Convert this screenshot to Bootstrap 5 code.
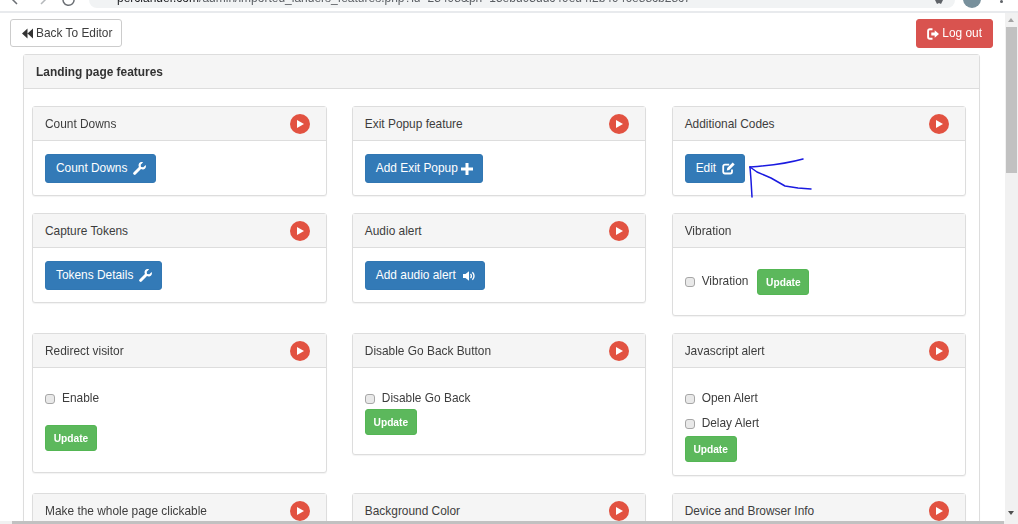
<!DOCTYPE html>
<html lang="en">
<head>
<meta charset="utf-8">
<title>Landing page features</title>
<link href="https://cdn.jsdelivr.net/npm/bootstrap@5.3.0/dist/css/bootstrap.min.css" rel="stylesheet">
<style>
html,body{margin:0;height:524px;overflow:hidden;background:#fff}
body{font-family:"Liberation Sans",Arial,sans-serif;font-size:11.9px;color:#3d3d3d}
.view{position:relative;width:1018px;height:524px;overflow:hidden;filter:blur(.35px)}
.chrome-bar{height:13px;border-bottom:2px solid #e8eaed;overflow:hidden;position:relative;background:#fff}
.chrome-nav{width:89px;flex:none}
.url-pill{width:866px;height:8px;background:#f1f3f4;border-radius:0 0 14px 14px;overflow:hidden;padding-left:28px;flex:none}
.url-text{font-size:12px;line-height:12px;margin-top:-8px;white-space:nowrap;color:#5a5e63}
.url-text b{font-weight:400;color:#202124}
.chrome-star{flex:none;margin-left:-21px}
.chrome-ava{width:18px;height:18px;border-radius:50%;background:#78909c;margin-top:-10px;margin-left:19px;flex:none}
.chrome-dots{width:3px;height:3px;border-radius:50%;background:#5f6368;margin-left:19px;flex:none}
.mid{height:508px}
.page{width:1005px;flex:none;overflow:hidden}
.top-actions{padding:6px 12px 0 10px;height:41px}
.btn-legacy{font-size:11.9px;line-height:17px;border-radius:3px;display:inline-flex;align-items:center;font-family:inherit}
.btn-back{height:28px;padding:0 9px 0 11px;gap:3px;background:#fff;border:1px solid #ccc;color:#3d3d3d}
.btn-out{height:29px;padding:0 10px;gap:3px;background:#d9534f;border:1px solid #d9534f;color:#fff}
.btn-main{height:29px;padding:0 9px 0 10px;gap:6px;background:#337ab7;border:1px solid #3177b3;color:#fff}
.gap-plus{gap:3px}
.gap-audio{gap:7px}
.btn-upd{height:26px;width:52px;justify-content:center;padding:0;background:#5cb85c;border:1px solid #54b654;color:#fff;font-size:10.2px;font-weight:700}
.outer{margin:0 25px 0 23px;border:1px solid #ddd;border-radius:3px;box-shadow:0 1px 1px rgba(0,0,0,.05)}
.outer-head{height:34px;background:#f5f5f5;border-bottom:1px solid #ddd;padding-left:12px;font-weight:700;font-size:11.9px;line-height:35px;color:#333}
.outer-body{padding:17px 12.75px 0 8px}
.tiles{display:grid;grid-template-columns:repeat(3,1fr);column-gap:25.25px;row-gap:17px;align-items:start}
.tile{border:1px solid #ddd;border-radius:3px;box-shadow:0 1px 1px rgba(0,0,0,.05);background:#fff}
.tile-head{height:34px;background:#f5f5f5;border-bottom:1px solid #ddd;padding:0 16px 0 12px;display:flex;align-items:center;justify-content:space-between}
.tile-title{padding-top:2px}
.tile-body{padding:13px 12px 12px}
.tile-form{padding-top:21px}
.tile-tall{height:104px}
.tile-vib{height:67px;padding-top:21px}
.tile-dis{height:86px}
.tile-js{height:107px}
.play{width:20px;height:20px;border-radius:50%;background:#e25241;display:flex;align-items:center;justify-content:center;flex:none}
.chk{display:flex;align-items:center;gap:7px;height:20px;margin:0}
.chk input{width:10px;height:10px;margin:0;border:1px solid #a6a6a6;border-radius:2px;background-color:#e9e9e9;flex:none}
.chk-vib{margin-top:3px}
.upd-vib{margin-left:9px}
.upd-tall{margin-top:16px}
.chk-next{margin-top:5px}
.upd-js{margin-top:2px}
.vscroll{width:13px;flex:none;background:#f1f1f1;position:relative}
.vthumb{position:absolute;left:1px;right:1px;top:14px;height:146px;background:#c1c1c1}
.arr-up,.arr-down{position:absolute;left:3px;width:0;height:0;border-left:3.5px solid transparent;border-right:3.5px solid transparent}
.arr-up{top:5px;border-bottom:4px solid #a3a3a3}
.arr-down{bottom:6px;border-top:4px solid #505050}
.hscroll{height:3px;background:#f1f1f1;padding-left:12px}
.hthumb{width:992px;height:3px;background:#c1c1c1}
.scribble{position:absolute;left:0;top:0;pointer-events:none}
</style>
</head>
<body>
<svg width="0" height="0" class="position-absolute">
  <defs>
    <symbol id="ic-play" viewBox="0 0 8 8"><path d="M1 0v8l7-4z" fill="#fff"/></symbol>
    <symbol id="ic-wrench" viewBox="0 0 13 13"><path d="M12.7 2.900 10.300 5.300 8 5 7.700 2.700 10.100.3C8.400-.3 6.500.3 5.800 2 5.400 3 5.500 4.100 5.900 5L.5 10.400a1.300 1.300 0 0 0 0 1.800l.3.300a1.300 1.300 0 0 0 1.800 0L8 7.100c.9.400 2 .5 3 .1 1.700-.7 2.300-2.600 1.700-4.300z" fill="#fff"/></symbol>
  </defs>
</svg>
<div class="view d-flex flex-column">
  <div class="chrome-bar d-flex align-items-start">
    <svg class="chrome-nav" width="89" height="8" viewBox="0 0 89 8" fill="none" stroke="#6b6f74" stroke-width="1.5"><path d="M17 -3 12 2 17 7M12 2H22" transform="translate(0 -3)"/><path d="M41 -3 46 2 41 7" transform="translate(0 -3)" stroke="#b5b8bb"/><path d="M74 0a5.500 5.500 0 1 1-1.500-3" transform="translate(0 -1)"/></svg>
    <div class="url-pill"><div class="url-text"><b>perclander.com</b>/admin/imported_landers_features.php?id=23498&amp;pn=15ebd93ddc49ed4f2b4946e88cb28c7</div></div>
    <svg class="chrome-star" width="10" height="6" viewBox="0 0 10 6"><path d="M1 0 3 4 5 3 7 4 9 0Z" fill="#5f6368"/></svg>
    <div class="chrome-ava"></div>
    <div class="chrome-dots"></div>
  </div>
  <div class="mid d-flex">
    <div class="page">
      <div class="top-actions d-flex justify-content-between align-items-start">
        <a href="#" class="btn btn-legacy btn-back">
          <svg width="11" height="11" viewBox="0 0 11 11" fill="#333"><path d="M5.500 .5v10L0 5.500zM11 .5v10L5.500 5.500z"/></svg>Back To Editor</a>
        <a href="#" class="btn btn-legacy btn-out">
          <svg width="12" height="12" viewBox="0 0 12 12" fill="none" stroke="#fff" stroke-width="1.900"><path d="M5.500 1.200H2.800A1.700 1.700 0 0 0 1.100 2.900v6.200a1.700 1.700 0 0 0 1.700 1.700h2.700"/><path d="M4.300 4.500h3.400V2.200L12 6 7.700 9.800V7.500H4.300z" fill="#fff" stroke="none"/></svg>Log out</a>
      </div>
      <div class="outer">
        <div class="outer-head">Landing page features</div>
        <div class="outer-body">
          <div class="tiles">

            <div class="tile">
              <div class="tile-head"><span class="tile-title">Count Downs</span><span class="play"><svg width="8" height="8"><use href="#ic-play"/></svg></span></div>
              <div class="tile-body"><a href="#" class="btn btn-legacy btn-main">Count Downs<svg width="13" height="13"><use href="#ic-wrench"/></svg></a></div>
            </div>

            <div class="tile">
              <div class="tile-head"><span class="tile-title">Exit Popup feature</span><span class="play"><svg width="8" height="8"><use href="#ic-play"/></svg></span></div>
              <div class="tile-body"><a href="#" class="btn btn-legacy btn-main gap-plus">Add Exit Popup<svg width="12" height="12" viewBox="0 0 12 12"><path d="M4.500 0h3v4.500H12v3H7.500V12h-3V7.500H0v-3h4.500z" fill="#fff"/></svg></a></div>
            </div>

            <div class="tile">
              <div class="tile-head"><span class="tile-title">Additional Codes</span><span class="play"><svg width="8" height="8"><use href="#ic-play"/></svg></span></div>
              <div class="tile-body"><a href="#" class="btn btn-legacy btn-main">Edit<svg width="13" height="13" viewBox="0 0 13 13" fill="none" stroke="#fff" stroke-width="1.800"><path d="M10 7.500v2.300a1.700 1.700 0 0 1-1.700 1.700H2.900a1.700 1.700 0 0 1-1.700-1.700V4.400a1.700 1.700 0 0 1 1.700-1.700h4.300"/><path d="M5.200 6 10.700.5 12.700 2.500 7.200 8 4.800 8.400z" fill="#fff" stroke="none"/></svg></a></div>
            </div>

            <div class="tile">
              <div class="tile-head"><span class="tile-title">Capture Tokens</span><span class="play"><svg width="8" height="8"><use href="#ic-play"/></svg></span></div>
              <div class="tile-body"><a href="#" class="btn btn-legacy btn-main">Tokens Details<svg width="13" height="13"><use href="#ic-wrench"/></svg></a></div>
            </div>

            <div class="tile">
              <div class="tile-head"><span class="tile-title">Audio alert</span><span class="play"><svg width="8" height="8"><use href="#ic-play"/></svg></span></div>
              <div class="tile-body"><a href="#" class="btn btn-legacy btn-main gap-audio">Add audio alert<svg width="12" height="10" viewBox="0 0 12 10"><path d="M0 3h2.500L6 .2v9.600L2.500 7H0z" fill="#fff"/><path d="M7.500 3a2.700 2.700 0 0 1 0 4M9.400 1.200a5.300 5.300 0 0 1 0 7.600" fill="none" stroke="#fff" stroke-width="1.400"/></svg></a></div>
            </div>

            <div class="tile">
              <div class="tile-head"><span class="tile-title">Vibration</span></div>
              <div class="tile-body tile-vib d-flex align-items-start">
                <label class="chk chk-vib"><input type="checkbox" class="form-check-input">Vibration</label>
                <button type="button" class="btn btn-legacy btn-upd upd-vib">Update</button>
              </div>
            </div>

            <div class="tile">
              <div class="tile-head"><span class="tile-title">Redirect visitor</span><span class="play"><svg width="8" height="8"><use href="#ic-play"/></svg></span></div>
              <div class="tile-body tile-form tile-tall">
                <label class="chk"><input type="checkbox" class="form-check-input">Enable</label>
                <button type="button" class="btn btn-legacy btn-upd upd-tall">Update</button>
              </div>
            </div>

            <div class="tile">
              <div class="tile-head"><span class="tile-title">Disable Go Back Button</span><span class="play"><svg width="8" height="8"><use href="#ic-play"/></svg></span></div>
              <div class="tile-body tile-form tile-dis">
                <label class="chk"><input type="checkbox" class="form-check-input">Disable Go Back</label>
                <button type="button" class="btn btn-legacy btn-upd">Update</button>
              </div>
            </div>

            <div class="tile">
              <div class="tile-head"><span class="tile-title">Javascript alert</span><span class="play"><svg width="8" height="8"><use href="#ic-play"/></svg></span></div>
              <div class="tile-body tile-form tile-js">
                <label class="chk"><input type="checkbox" class="form-check-input">Open Alert</label>
                <label class="chk chk-next"><input type="checkbox" class="form-check-input">Delay Alert</label>
                <button type="button" class="btn btn-legacy btn-upd upd-js">Update</button>
              </div>
            </div>

            <div class="tile">
              <div class="tile-head"><span class="tile-title">Make the whole page clickable</span><span class="play"><svg width="8" height="8"><use href="#ic-play"/></svg></span></div>
            </div>
            <div class="tile">
              <div class="tile-head"><span class="tile-title">Background Color</span><span class="play"><svg width="8" height="8"><use href="#ic-play"/></svg></span></div>
            </div>
            <div class="tile">
              <div class="tile-head"><span class="tile-title">Device and Browser Info</span><span class="play"><svg width="8" height="8"><use href="#ic-play"/></svg></span></div>
            </div>

          </div>
        </div>
      </div>
    </div>
    <div class="vscroll"><div class="arr-up"></div><div class="vthumb"></div><div class="arr-down"></div></div>
  </div>
  <div class="hscroll"><div class="hthumb"></div></div>
  <svg class="scribble" width="1018" height="524" viewBox="0 0 1018 524" fill="none" stroke="#1a1ae0" stroke-width="1.500" stroke-linecap="round" stroke-linejoin="round">
    <path d="M750 167C765 166 785 164 803 159"/>
    <path d="M750 167L757 172L771 178L785 186L798 188L811 189"/>
    <path d="M750 167L751 180L752 197"/>
  </svg>
</div>
<script src="https://cdn.jsdelivr.net/npm/bootstrap@5.3.0/dist/js/bootstrap.bundle.min.js"></script>
</body>
</html>
